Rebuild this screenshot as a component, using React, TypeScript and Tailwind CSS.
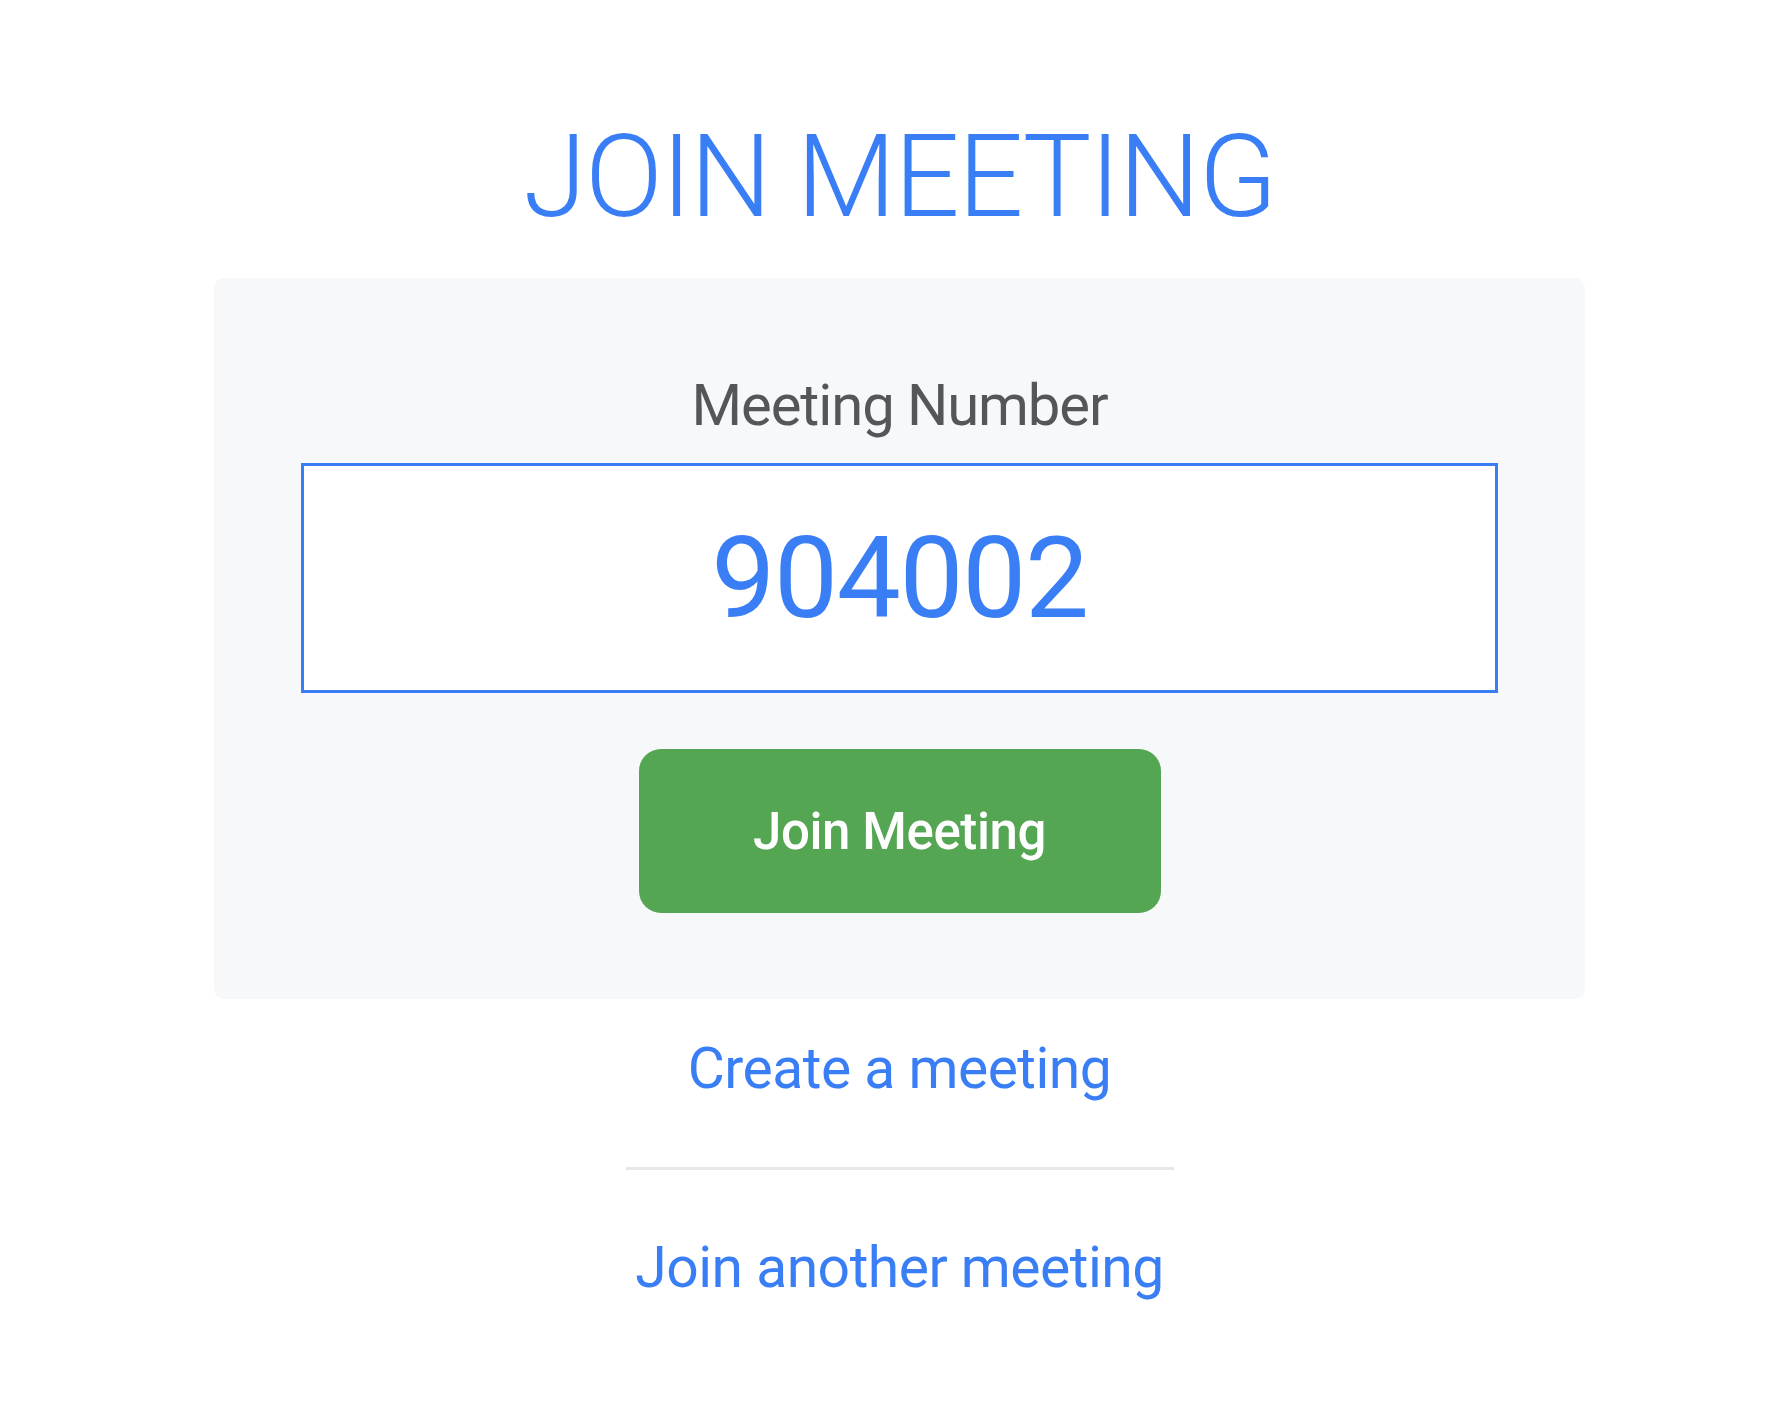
export default function App() {
  return (
    <div className="min-h-screen bg-white pl-[11px] font-['Roboto','Liberation_Sans',sans-serif]">
      <div className="flex flex-col items-center pt-[119px]">
        <h1 className="text-[115px] leading-[115px] font-light tracking-[-1.7px] text-[#3a7ef6]">JOIN MEETING</h1>

        <div className="mt-[44px] flex w-[1371px] flex-col items-center rounded-[10px] bg-[#f7f8fa] px-[87px] pt-[98px] pb-[86px]">
          <label className="text-[58px] leading-[58px] tracking-[-1.1px] text-[#53575a]">Meeting Number</label>
          <div className="mt-[29px] flex h-[230px] w-full items-center justify-center border-[3px] border-[#3a7ef6] bg-white">
            <span className="text-[114px] leading-[114px] tracking-[-1.3px] text-[#3a7ef6]">904002</span>
          </div>
          <button className="mt-[56px] flex h-[164px] w-[522px] items-center justify-center rounded-[22px] bg-[#54a653] text-[51px] leading-[51px] font-medium tracking-[-0.4px] text-white">
            Join Meeting
          </button>
        </div>

        <a className="mt-[41px] text-[57px] leading-[57px] tracking-[-0.5px] text-[#3a7ef6]">Create a meeting</a>
        <div className="mt-[70px] h-[3px] w-[548px] bg-[#e8e8e8]" />
        <a className="mt-[69px] text-[57px] leading-[57px] tracking-[-0.5px] text-[#3a7ef6]">Join another meeting</a>
      </div>
    </div>
  );
}
